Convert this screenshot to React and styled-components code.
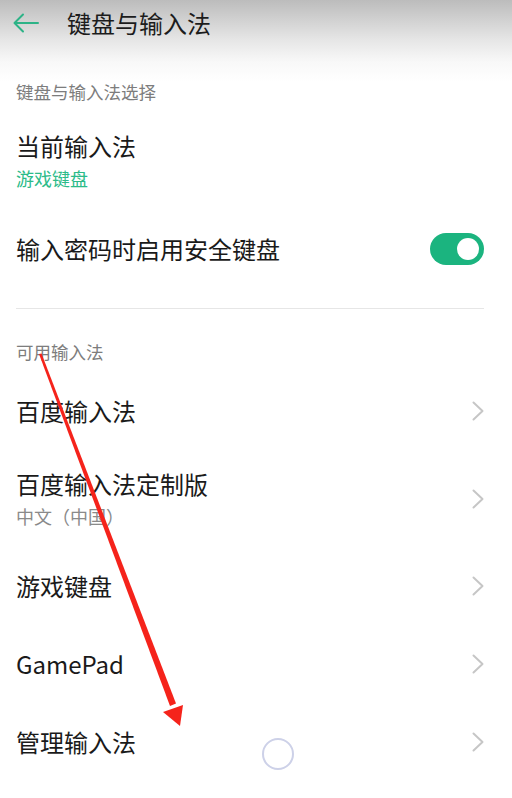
import React from 'react';
import styled, { createGlobalStyle } from 'styled-components';

const GlobalStyle = createGlobalStyle`
  html, body {
    margin: 0;
    padding: 0;
    background: #ffffff;
  }
  body {
    font-family: "Noto Sans CJK SC", "Noto Sans", sans-serif;
    color: #1a1a1a;
  }
`;

const methods = [
  { title: '百度输入法' },
  { title: '百度输入法定制版', sub: '中文（中国）' },
  { title: '游戏键盘' },
  { title: 'GamePad' },
  { title: '管理输入法' },
];

const BackArrow = () => (
  <svg width="26" height="20" viewBox="0 0 26 20">
    <path d="M1.5 10 H25 M10 1.5 L1.5 10 L10 18.5" fill="none" stroke="#2db387" strokeWidth="2" strokeLinecap="round" strokeLinejoin="round" />
  </svg>
);

const Chevron = () => (
  <svg width="12" height="20" viewBox="0 0 12 20">
    <path d="M1.5 1.5 L10.5 10 L1.5 18.5" fill="none" stroke="#c6c6c6" strokeWidth="2" strokeLinecap="round" strokeLinejoin="round" />
  </svg>
);

const App = () => {
  return (
    <Page>
      <GlobalStyle />
      <Header>
        <BackButton><BackArrow /></BackButton>
        <HeaderTitle>键盘与输入法</HeaderTitle>
      </Header>

      <SectionTitle $top={36} $bottom={0}>键盘与输入法选择</SectionTitle>

      <InfoRow>
        <RowTitle>当前输入法</RowTitle>
        <RowValue>游戏键盘</RowValue>
      </InfoRow>

      <Row $height={78}>
        <RowTitle>输入密码时启用安全键盘</RowTitle>
        <Toggle><Knob /></Toggle>
      </Row>

      <Divider />

      <SectionTitle $top={33} $bottom={10}>可用输入法</SectionTitle>

      {methods.map((m) => (
        <Row key={m.title} $height={m.sub ? 97 : 78}>
          <TextBlock>
            <RowTitle>{m.title}</RowTitle>
            {m.sub && <RowSub>{m.sub}</RowSub>}
          </TextBlock>
          <Chevron />
        </Row>
      ))}

      {/* red arrow drawn over the screenshot */}
      <Annotation width="512" height="798" viewBox="0 0 512 798">
        <polygon points="39,354 41.5,353.5 176,703.5 170,706" fill="#f5231b" />
        <polygon points="163,712 183,705 180,726" fill="#f5231b" />
      </Annotation>
      <TouchRing />
    </Page>
  );
};

const Page = styled.div`
  position: relative;
  width: 512px;
  height: 798px;
  overflow: hidden;
  background: linear-gradient(#bcbcbc 0px, #e6e6e6 40px, #f8f8f8 62px, #ffffff 82px);
`;

const Header = styled.div`
  display: flex;
  align-items: center;
  height: 46px;
  padding: 0 0 0 13px;
`;

const BackButton = styled.div`
  display: flex;
  align-items: center;
  width: 54px;
`;

const HeaderTitle = styled.div`
  font-size: 24px;
  line-height: 32px;
  color: #1c1c1c;
`;

const SectionTitle = styled.div`
  padding: ${(p) => p.$top}px 16px ${(p) => p.$bottom}px;
  font-size: 17.5px;
  line-height: 20px;
  color: #7d7d7d;
`;

const InfoRow = styled.div`
  display: flex;
  flex-direction: column;
  gap: 6px;
  padding: 30px 16px 20px;
`;

const Row = styled.div`
  display: flex;
  align-items: center;
  justify-content: space-between;
  height: ${(p) => p.$height}px;
  padding: 0 28px 0 16px;
`;

const TextBlock = styled.div`
  display: flex;
  flex-direction: column;
  gap: 6px;
`;

const RowTitle = styled.div`
  font-size: 24px;
  line-height: 28px;
  color: #1a1a1a;
`;

const RowValue = styled.div`
  font-size: 18px;
  line-height: 24px;
  color: #2cbb89;
`;

const RowSub = styled.div`
  font-size: 18px;
  line-height: 24px;
  color: #8a8a8a;
`;

const Toggle = styled.div`
  display: flex;
  align-items: center;
  justify-content: flex-end;
  width: 54px;
  height: 32px;
  padding: 0 5px;
  box-sizing: border-box;
  border-radius: 16px;
  background: #1bb47f;
`;

const Knob = styled.div`
  width: 22px;
  height: 22px;
  border-radius: 50%;
  background: #ffffff;
`;

const Divider = styled.div`
  height: 1px;
  margin: 20px 28px 0 16px;
  background: #e6e6e6;
`;

const Annotation = styled.svg`
  position: absolute;
  left: 0;
  top: 0;
  pointer-events: none;
`;

const TouchRing = styled.div`
  position: absolute;
  left: 262px;
  top: 738px;
  width: 28px;
  height: 28px;
  border-radius: 50%;
  border: 2px solid #cdd1e8;
`;

export default App;
